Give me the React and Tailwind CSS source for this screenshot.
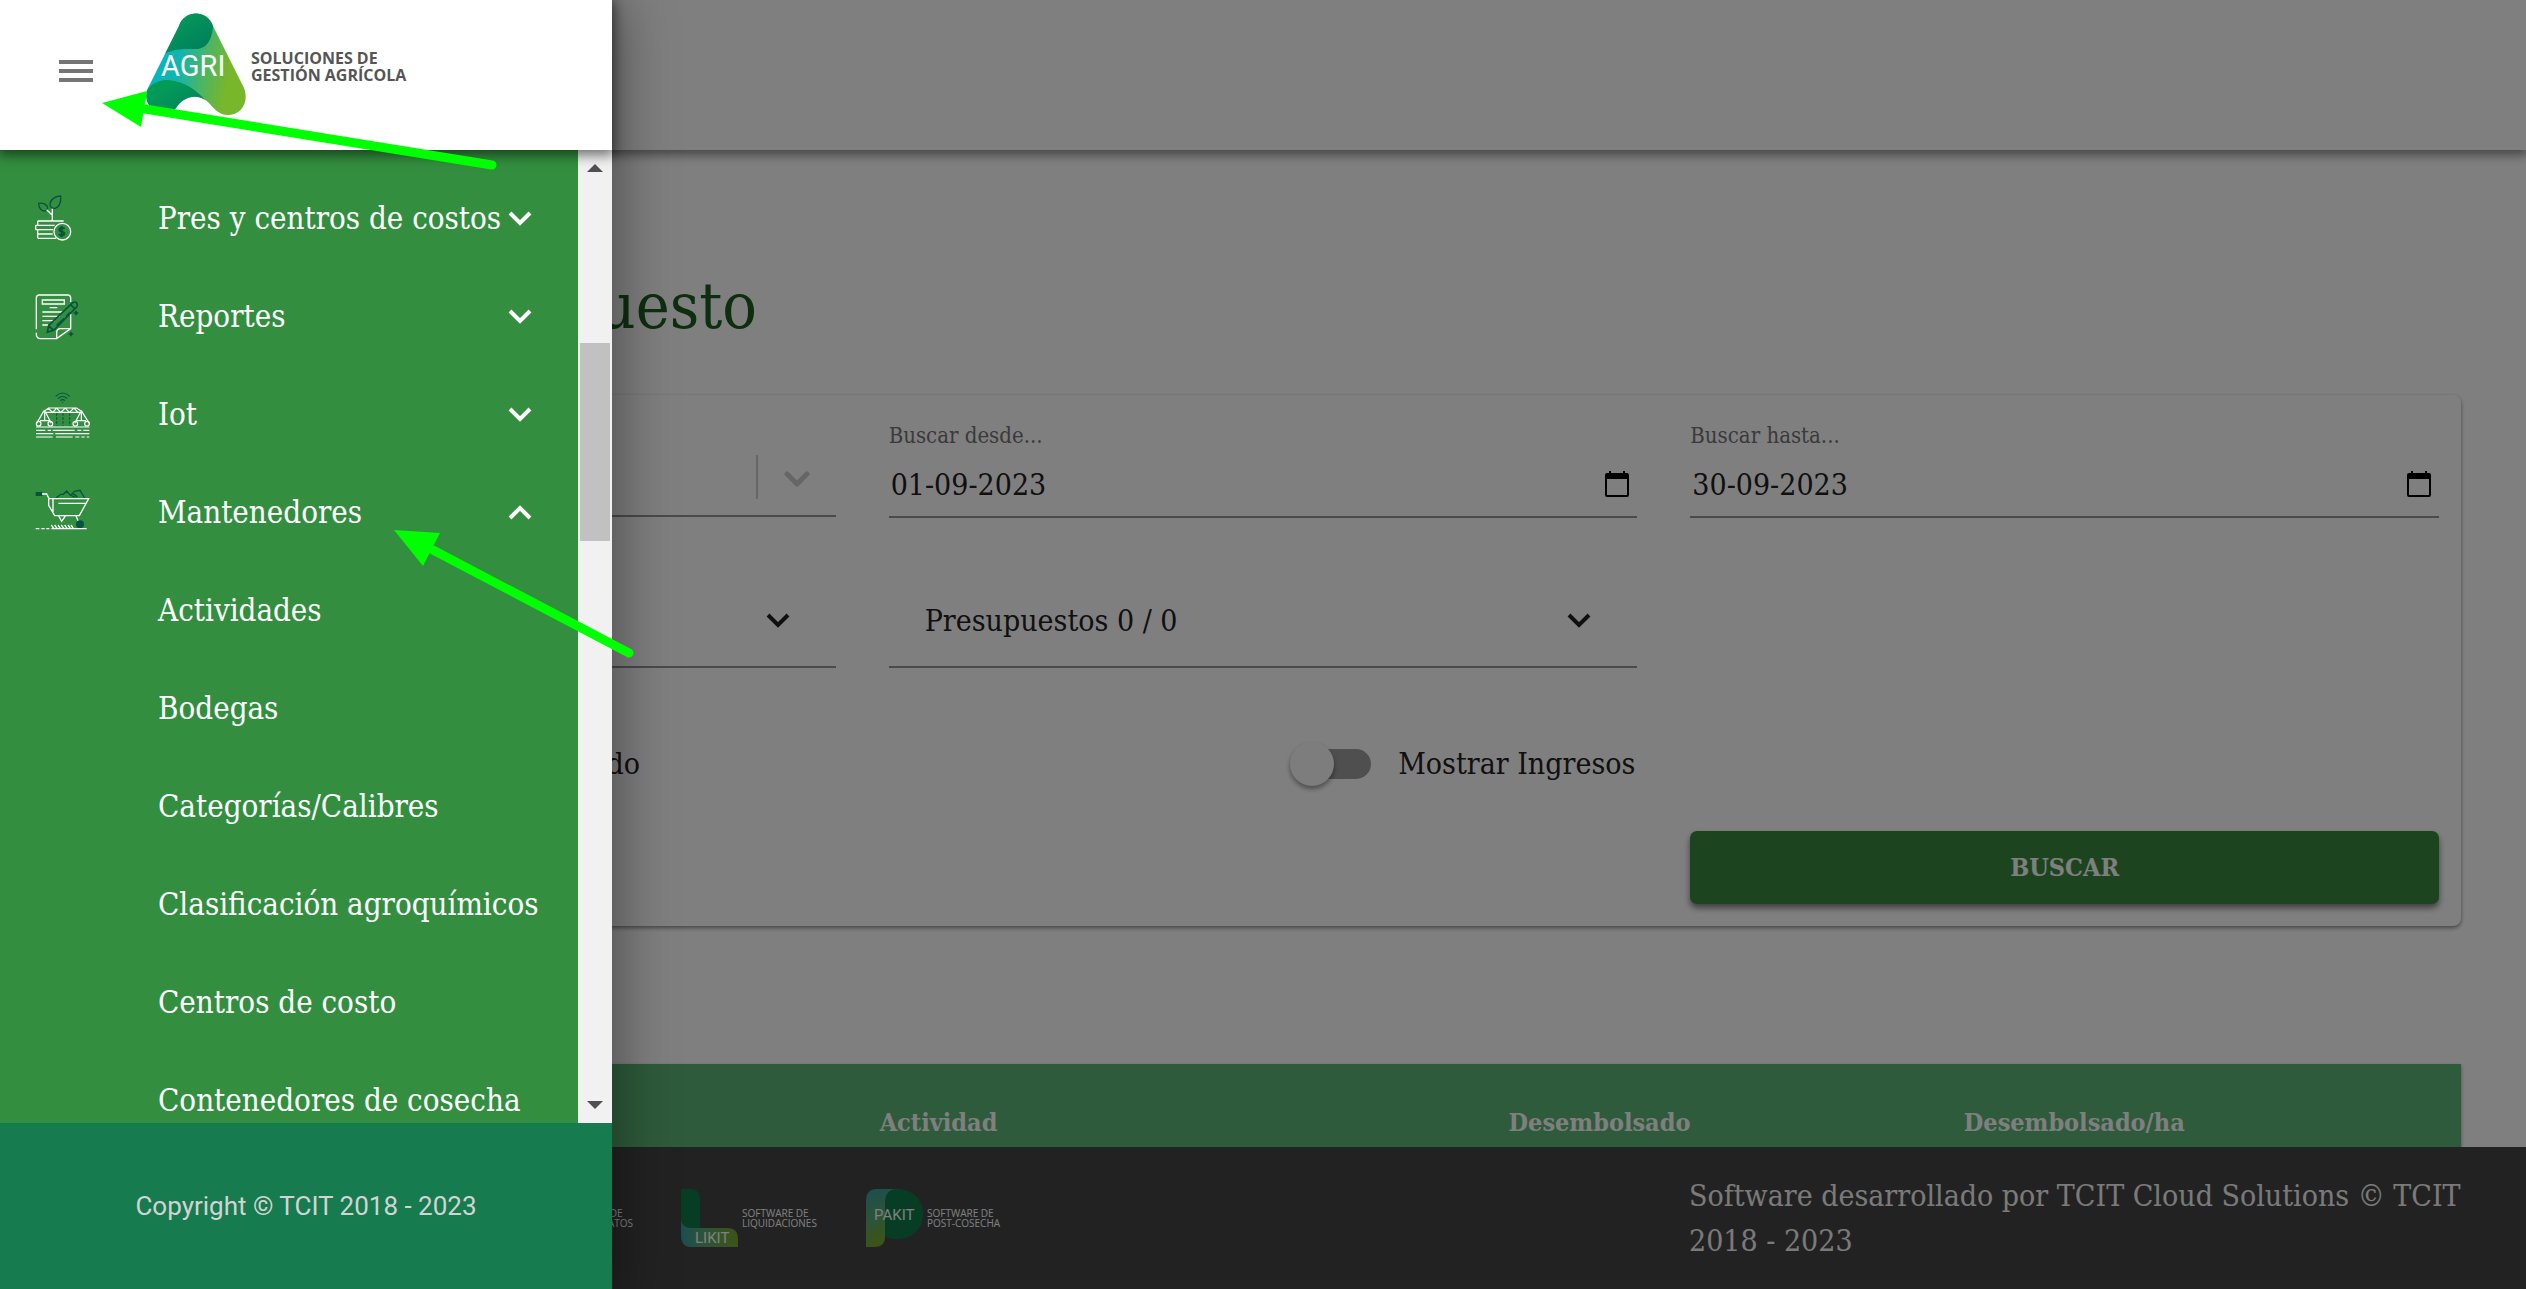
import React from "react";

const white = "#ffffff";
const deep = "#0a5240";

function CostsIcon() {
  return (
    <svg viewBox="45 40 165 144" width="55" height="48" fill="none" strokeWidth="4" className="shrink-0" aria-hidden="true">
      <path d="M56 68 C56 82 64 91 74 91 C82 91 85 82 81 76 C76 69 66 66 56 68Z" stroke={deep} />
      <path d="M122 46 C108 46 92 55 90 70 C89 80 97 84 105 83 C118 80 124 64 122 46Z" stroke={deep} />
      <path d="M97 120 V84 M97 104 L80 87 M53 121 H131 M53 121 V132 M47 134 H104 M47 134 V147 M47 147 H100 M53 147 V172 M53 160 H98 M53 173 H108" stroke={white} />
      <circle cx="127" cy="153" r="25" stroke={white} />
      <path d="M133 145 C131 139 118 140 118 147 C118 155 134 151 133 159 C132 166 119 166 117 159 M125 136 V170" stroke={deep} strokeWidth="6" />
    </svg>
  );
}

function ReportsIcon() {
  return (
    <svg viewBox="45 334 165 144" width="55" height="48" fill="none" strokeWidth="4" className="shrink-0" aria-hidden="true">
      <path d="M49 446 V352 Q49 343 58 343 H143 Q152 343 152 352 V364 M152 400 V444 L110 474 H62 Q49 474 49 460 V456 M152 444 H122 Q110 444 110 456 V474" stroke={white} />
      <path d="M67 358 H133 V370 H67Z M89 381 H112 M67 394 H128 M67 407 H118 M67 420 H104 M67 433 H84" stroke={white} />
      <path d="M82 455 L86 434 L158 366 Q170 360 172 372 L171 378 L102 448 Z M152 372 L165 385 M86 436 L100 448 M110 434 L132 414 M138 408 L150 396" stroke={deep} strokeWidth="5" />
      <path d="M168 390 V404 M161 397 H175 M153 453 V467 M146 460 H160" stroke={deep} strokeWidth="5" />
    </svg>
  );
}

function IotIcon() {
  return (
    <svg viewBox="45 30 165 144" width="55" height="48" fill="none" strokeWidth="3.5" className="shrink-0" aria-hidden="true">
      <path d="M107 49 Q128 29 149 49 M114 56 Q128 43 142 56 M121 62 Q128 56 135 62" stroke={deep} />
      <circle cx="128" cy="67" r="2" fill={deep} />
      <path d="M110 100 V138 M129 100 V138 M149 100 V138" stroke={deep} strokeDasharray="7 5" />
      <path d="M72 94 L86 84 H170 L184 94 M72 97 L92 97 H164 L184 97 M84 84 L98 97 L110 84 L122 97 L136 84 L148 97 L162 84 L174 97 M72 92 L50 130 M74 92 L94 130 M184 92 L164 130 M184 92 L208 130 M60 122 H88 M168 122 H198 M74 96 V122 M184 96 V122 M48 141 H208" stroke={white} />
      <circle cx="56" cy="131" r="7" stroke={white} /><circle cx="91" cy="131" r="7" stroke={white} />
      <circle cx="166" cy="131" r="7" stroke={white} /><circle cx="201" cy="131" r="7" stroke={white} />
      <path d="M48 151 H76 M83 151 H93 M98 151 H164 M172 151 H184 M190 151 H208 M48 161 H100 M106 161 H208 M48 171 H98 M108 171 H158 M166 171 H178 M184 171 H194 M200 171 H208" stroke={white} />
    </svg>
  );
}

function BarrowIcon() {
  return (
    <svg viewBox="45 324 165 144" width="55" height="48" fill="none" strokeWidth="4" className="shrink-0" aria-hidden="true">
      <rect x="47" y="336" width="20" height="12" fill={deep} />
      <path d="M108 354 L122 343 H130 L140 333 L150 345 L166 352 M153 344 L164 334 L180 331 L194 354 M158 342 Q168 344 172 352" stroke={deep} />
      <path d="M66 342 H80 L87 356 H206 L178 407 H104 L86 376 V356 M99 358 V396 M115 370 H196 M116 408 L125 424 L136 408 M168 408 L176 426" stroke={white} />
      <circle cx="180" cy="433" r="12" fill={deep} />
      <path d="M47 446 H58 M64 446 H74 M79 446 H88 M94 446 H200 M94 435 L101 445 M104 435 L111 445 M114 435 L121 445 M124 435 L131 445 M134 435 L141 445 M144 435 L151 445 M153 435 L160 445" stroke={white} />
    </svg>
  );
}

function Chevron({ up = false, className = "" }) {
  return (
    <svg viewBox="0 0 24 15" width="24" height="15" fill="none" stroke="currentColor" strokeWidth="4" className={"shrink-0 " + className} aria-hidden="true">
      <path d={up ? "M2 13 L12 3 L22 13" : "M2 2 L12 12 L22 2"} />
    </svg>
  );
}

function CalendarIcon() {
  return (
    <svg viewBox="0 0 24 26" width="24" height="26" aria-hidden="true">
      <path d="M4 0 H6 V2 H18 V0 H20 V2 H22 Q24 2 24 4 V24 Q24 26 22 26 H2 Q0 26 0 24 V4 Q0 2 2 2 H4Z M2 8 V24 H22 V8Z" fill="#000" fillRule="evenodd" />
    </svg>
  );
}

function AgriLogo() {
  return (
    <svg viewBox="145 12 104 106" width="104" height="106" className="shrink-0" role="img" aria-label="AGRI">
      <defs>
        <linearGradient id="agriBody" x1="0" y1="0.4" x2="1" y2="0.6">
          <stop offset="0" stopColor="#00b5c8" />
          <stop offset="0.35" stopColor="#12b5ae" />
          <stop offset="0.62" stopColor="#55b558" />
          <stop offset="0.8" stopColor="#78b62c" />
        </linearGradient>
        <linearGradient id="agriTop" x1="0" y1="0" x2="1" y2="1">
          <stop offset="0.3" stopColor="#049a58" />
          <stop offset="1" stopColor="#00785c" />
        </linearGradient>
        <clipPath id="agriShape">
          <path d="M179 26 C184 10 207 9 213 26 L244 88 C250 104 239 116 228 115 C218 115 213 107 208 102 C198 93 183 96 176 108 C170 117 150 112 147 101 C146 97 146 93 148 88 Z" />
        </clipPath>
      </defs>
      <g clipPath="url(#agriShape)">
        <rect x="140" y="10" width="112" height="110" fill="url(#agriBody)" />
        <path d="M140 10 H213 C215 36 209 49 195 49 C184 49 174 48 160 56Z" fill="url(#agriTop)" />
        <path d="M140 100 C148 84 158 80 168 80 C186 82 196 90 205 100 L200 120 H140Z" fill="url(#agriTop)" />
      </g>
      <text x="161" y="76" fontSize="29" fill="#fff" fontFamily="Roboto, sans-serif">AGRI</text>
    </svg>
  );
}

function LikitLogo() {
  return (
    <svg viewBox="0 0 57 58" width="57" height="58" className="shrink-0" role="img" aria-label="LIKIT">
      <defs>
        <linearGradient id="likit" x1="0" x2="1"><stop offset="0" stopColor="#3a9aa5" /><stop offset="0.4" stopColor="#55a872" /><stop offset="1" stopColor="#7ba82c" /></linearGradient>
      </defs>
      <path d="M0 0 H10 Q19 0 19 12 V40 H0Z" fill="#0f7a4b" />
      <path d="M0 32 Q2 39 10 39 H46 Q57 39 57 50 V58 H10 Q0 58 0 46Z" fill="url(#likit)" />
      <text x="14" y="54" fontSize="15" fill="#fff" fontFamily="Roboto, sans-serif">LIKIT</text>
    </svg>
  );
}

function PakitLogo() {
  return (
    <svg viewBox="0 0 57 58" width="57" height="58" className="shrink-0" role="img" aria-label="PAKIT">
      <defs>
        <linearGradient id="pakit" x1="0" y1="0" x2="0.3" y2="1"><stop offset="0" stopColor="#3a9aa5" /><stop offset="0.5" stopColor="#55a872" /><stop offset="1" stopColor="#7ba82c" /></linearGradient>
      </defs>
      <path d="M0 12 Q0 0 11 0 H34 V42 H19 V48 Q19 58 8 58 H0Z" fill="url(#pakit)" />
      <path d="M31 0 C48 0 57 12 57 25 C57 39 47 50 31 50 Q24 50 19 47 V14 Q19 0 31 0Z" fill="#0f7a4b" />
      <text x="8" y="31" fontSize="15" fill="#fff" fontFamily="Roboto, sans-serif">PAKIT</text>
    </svg>
  );
}

const menu = [
  { label: "Pres y centros de costos", Icon: CostsIcon },
  { label: "Reportes", Icon: ReportsIcon },
  { label: "Iot", Icon: IotIcon },
  { label: "Mantenedores", Icon: BarrowIcon, open: true },
];

const subMenu = ["Actividades", "Bodegas", "Categorías/Calibres", "Clasificación agroquímicos", "Centros de costo", "Contenedores de cosecha"];

function DateField({ id, label, value }) {
  return (
    <div className="flex h-[102px] flex-col border-b-2 border-[#949494] pt-1">
      <label htmlFor={id} className="text-[22px] leading-8 text-[#757575]">{label}</label>
      <div className="flex flex-1 items-center pr-2">
        <input id={id} type="text" defaultValue={value} className="min-w-0 flex-1 bg-transparent pl-[2px] text-[30px] text-[#212121] outline-none" />
        <button type="button" aria-label={"Abrir calendario: " + label}><CalendarIcon /></button>
      </div>
    </div>
  );
}

function PickerButton({ label, name }) {
  return (
    <button type="button" aria-label={name} className="flex h-[94px] items-center justify-between border-b-2 border-[#949494] pr-[46px] pl-9 text-left text-[30px] text-[#212121]">
      <span>{label}</span>
      <Chevron />
    </button>
  );
}

function Toggle({ label, className = "" }) {
  return (
    <label className={"flex items-center text-[30px] text-[#212121] " + className}>
      <input type="checkbox" role="switch" className="peer sr-only" />
      <span className="mr-[27px] flex h-[30px] w-[64px] items-center rounded-full bg-[#9e9e9e]">
        <span className="-ml-[17px] size-11 shrink-0 rounded-full bg-[#fafafa] shadow-[0_3px_5px_rgba(0,0,0,0.4)]" />
      </span>
      {label}
    </label>
  );
}

function Page() {
  return (
    <div className="flex h-full flex-col bg-white">
      <header className="z-10 h-[150px] shrink-0 bg-white shadow-[0_3px_10px_2px_rgba(0,0,0,0.45)]" />
      <main className="min-h-0 flex-1 overflow-hidden px-[65px]">
        <h1 className="mt-[114px] w-[692px] text-right text-[64px] leading-[84px] whitespace-nowrap text-[#1b5e20]">Presupuesto</h1>
        <section className="mt-[47px] grid h-[531px] grid-cols-3 content-start gap-x-[53px] rounded-lg bg-white px-[22px] pt-[21px] shadow-[0_2px_4px_rgba(0,0,0,0.45)]">
          <div className="flex h-[101px] items-end border-b-2 border-[#949494]">
            <div className="ml-auto flex h-[60px] items-start pr-[26px] text-[#cccccc]">
              <span className="mr-[26px] h-11 w-[2px] bg-[#cccccc]" />
              <button type="button" aria-label="Abrir lista" className="mt-4">
                <svg viewBox="0 0 26 16" width="26" height="16" fill="none" stroke="currentColor" strokeWidth="5" strokeLinecap="round" strokeLinejoin="round" aria-hidden="true"><path d="M3 3 L13 13 L23 3" /></svg>
              </button>
            </div>
          </div>
          <DateField id="desde" label="Buscar desde..." value="01-09-2023" />
          <DateField id="hasta" label="Buscar hasta..." value="30-09-2023" />
          <div className="col-span-3 mt-14 grid grid-cols-3 gap-x-[53px]">
            <PickerButton name="Temporadas" />
            <PickerButton label="Presupuestos 0 / 0" />
          </div>
          <div className="col-span-3 mt-[73px] grid grid-cols-3 gap-x-[53px]">
            <Toggle label="Ver consolidado" className="w-[553px] justify-end" />
            <Toggle label="Mostrar Ingresos" className="justify-end pr-[2px]" />
          </div>
          <button type="button" className="col-start-3 mt-[45px] h-[73px] rounded-[7px] bg-[#388a3e] text-[25px] font-bold text-white shadow-[0_4px_6px_rgba(0,0,0,0.5)]">BUSCAR</button>
        </section>
        <table className="mt-[138px] w-full table-fixed bg-[#5cb676] text-left text-[25px] text-white shadow-[0_2px_4px_rgba(0,0,0,0.4)]">
          <thead>
            <tr className="h-[117px]">
              <th className="w-[34%] pl-10 font-bold">Código</th>
              <th className="w-[26%] font-bold">Actividad</th>
              <th className="w-[19%] pl-[6px] font-bold">Desembolsado</th>
              <th className="w-[21%] pl-[6px] font-bold">Desembolsado/ha</th>
            </tr>
          </thead>
        </table>
      </main>
      <footer className="z-10 flex h-[142px] shrink-0 items-center justify-between bg-[#444444] text-white">
        <div className="flex items-center font-['Open_Sans',sans-serif] text-[10px] leading-[10px]">
          <p className="w-[633px] text-right whitespace-pre">{"SOFTWARE DE    \nANÁLISIS DE DATOS"}</p>
          <div className="ml-12 flex w-[185px] items-center gap-1"><LikitLogo /><p>SOFTWARE DE<br />LIQUIDACIONES</p></div>
          <div className="flex items-center gap-1"><PakitLogo /><p>SOFTWARE DE<br />POST-COSECHA</p></div>
        </div>
        <p className="w-[837px] pr-12 text-[30px] leading-[45px] text-[#f5f5f5]">Software desarrollado por TCIT Cloud Solutions © TCIT 2018 - 2023</p>
      </footer>
    </div>
  );
}

function Drawer() {
  return (
    <aside className="absolute inset-y-0 left-0 z-30 flex w-[612px] flex-col bg-white shadow-[0_12px_50px_10px_rgba(0,0,0,0.35)]">
      <div className="z-10 flex h-[150px] shrink-0 items-center bg-white pl-[59px] shadow-[0_3px_12px_2px_rgba(0,0,0,0.55)]">
        <button type="button" aria-label="Menú" className="mb-2 flex w-[34px] flex-col gap-[5px]">
          <span className="h-1 bg-[#757575]" />
          <span className="h-1 bg-[#757575]" />
          <span className="h-1 bg-[#757575]" />
        </button>
        <a href="#inicio" className="mb-5 ml-[52px] flex items-center gap-[2px]">
          <AgriLogo />
          <span className="pt-1 font-['Open_Sans',sans-serif] text-base leading-[17px] font-bold whitespace-nowrap text-[#555555]">SOLUCIONES DE<br />GESTIÓN AGRÍCOLA</span>
        </a>
      </div>
      <div className="flex min-h-0 flex-1 bg-[#338f3f]">
        <nav className="flex-1 overflow-hidden pt-[19px] text-[31px] whitespace-nowrap text-white">
          {menu.map(({ label, Icon, open }) => (
            <button key={label} type="button" aria-expanded={!!open} className="flex h-[98px] w-full items-center pr-[46px] pl-[35px] text-left">
              <Icon />
              <span className="ml-[68px] flex-1">{label}</span>
              <Chevron up={open} />
            </button>
          ))}
          {subMenu.map((label) => (
            <a key={label} href="#mantenedores" className="flex h-[98px] items-center pl-[158px]">{label}</a>
          ))}
        </nav>
        <div className="flex w-[34px] flex-col items-center bg-[#f1f1f1]" aria-hidden="true">
          <svg viewBox="0 0 16 8" width="16" height="8" className="mt-[14px]"><path d="M0 8 L8 0 L16 8Z" fill="#505050" /></svg>
          <span className="mt-[171px] h-[198px] w-[30px] bg-[#c1c1c1]" />
          <svg viewBox="0 0 16 8" width="16" height="8" className="mt-auto mb-[14px]"><path d="M0 0 L8 8 L16 0Z" fill="#505050" /></svg>
        </div>
      </div>
      <div className="flex h-[166px] shrink-0 items-center justify-center bg-[#167b4f] font-[Roboto,sans-serif] text-[26px] text-[#d3d3d3]">Copyright © TCIT 2018 - 2023</div>
    </aside>
  );
}

export default function App() {
  return (
    <div className="relative h-screen overflow-hidden font-['Roboto_Slab','DejaVu_Serif_Condensed','DejaVu_Serif',serif]">
      <Page />
      <div className="absolute inset-0 z-20 bg-black/50" />
      <Drawer />
      <svg viewBox="0 0 660 680" width="660" height="680" className="pointer-events-none absolute top-0 left-0 z-40" fill="#00ff00" stroke="#00ff00" aria-hidden="true">
        <path d="M102 103 L147 91 L141 127Z M394 530 L440 533 L423 566Z" stroke="none" />
        <path d="M145 109 L492 165 M433 550 L629 653" strokeWidth="9" strokeLinecap="round" />
      </svg>
    </div>
  );
}
